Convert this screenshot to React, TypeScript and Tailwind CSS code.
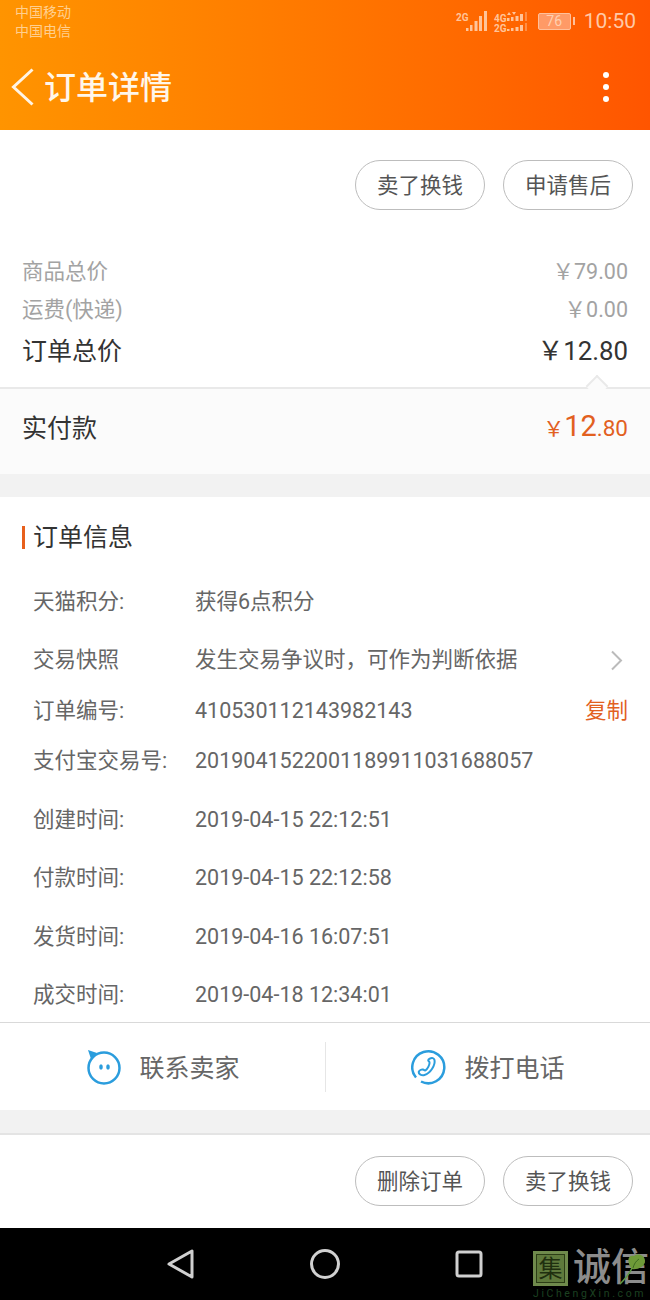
import React from "react";

const font = { fontFamily: '"Roboto","Noto Sans CJK SC",sans-serif' };

function Pill({ children }: { children: React.ReactNode }) {
  return (
    <div className="flex h-[50px] w-[130px] items-center justify-center rounded-full border border-[#bdbdbd] pt-[2px] text-[21.500px] leading-none text-[#555]">
      {children}
    </div>
  );
}

function Price({ label, value, cls, h, valueCls }: { label: string; value: string; cls: string; h: string; valueCls?: string }) {
  return (
    <div className={`flex items-center justify-between pl-[22px] pr-[22px] ${cls} ${h}`}>
      <span>{label}</span>
      <span className={valueCls}>{value}</span>
    </div>
  );
}

function Row({ label, value, h, right }: { label: string; value: string; h: string; right?: React.ReactNode }) {
  return (
    <div className={`flex items-center pl-[33px] pr-[22px] text-[21.500px] leading-none text-[#666] ${h}`}>
      <span className="w-[162px] shrink-0">{label}</span>
      <span className="flex-1">{value}</span>
      {right}
    </div>
  );
}

function Signal() {
  return (
    <svg width="76" height="24" viewBox="0 0 76 24" fill="#ffc49a">
      <text x="1" y="12" fontSize="10" fontWeight="700" fontFamily="Roboto">2G</text>
      <rect x="11" y="19" width="2.500" height="3" /><rect x="15" y="16" width="2.500" height="6" /><rect x="19.500" y="12" width="3" height="10" /><rect x="24" y="7" width="3" height="15" /><rect x="29" y="2" width="3" height="20" />
      <text x="39" y="13" fontSize="10" fontWeight="700" fontFamily="Roboto">4G</text>
      <text x="39" y="23" fontSize="10" fontWeight="700" fontFamily="Roboto">2G</text>
      <path d="M52 6l2-3 2 3zM57 3l2 3 2-3z" />
      <rect x="52" y="9" width="2.500" height="3" /><rect x="56" y="8" width="2.500" height="4" /><rect x="60.500" y="7" width="3" height="5" /><rect x="65" y="5" width="3" height="7" /><rect x="70" y="3" width="2" height="9" opacity=".45" />
      <rect x="52" y="20" width="2.500" height="2" /><rect x="56" y="19" width="2.500" height="3" /><rect x="60.500" y="18" width="3" height="4" /><rect x="65" y="16" width="3" height="6" /><rect x="70" y="14" width="2" height="8" opacity=".45" />
    </svg>
  );
}

export default function App() {
  return (
    <div className="flex h-[1300px] w-[650px] flex-col overflow-hidden bg-white" style={font}>
      <header className="h-[130px] shrink-0 bg-gradient-to-r from-[#ff9400] to-[#ff5500]">
        <div className="flex h-[43px] items-start justify-between pl-[15px] pr-[14px]">
          <div className="pt-[3px] text-[14px] leading-[19px] text-[#ffcf8f]">
            <div>中国移动</div>
            <div>中国电信</div>
          </div>
          <div className="flex h-[43px] items-center gap-[7px] pb-[1px]">
            <Signal />
            <div className="flex items-center gap-[2px]">
              <div className="flex h-[17px] w-[33px] items-center justify-center rounded-[2px] border border-[#ffc09a] bg-[#ff9a66] text-[14px] leading-none text-[#ffd0b0]">76</div>
              <div className="h-[8px] w-[2px] bg-[#ffc09a]" />
            </div>
            <span className="ml-[2px] text-[21px] leading-none text-[#ffc9a6]">10:50</span>
          </div>
        </div>
        <div className="flex h-[87px] items-center justify-between pl-[11px] pr-[41px]">
          <div className="flex items-center gap-[9px]">
            <svg width="24" height="38" viewBox="0 0 24 38" fill="none" stroke="#fff4e4" strokeWidth="3">
              <path d="M21.500 1.500 2.500 19l19 17.500" />
            </svg>
            <span className="pt-[3px] text-[32px] font-medium leading-none text-[#fff6ea]">订单详情</span>
          </div>
          <div className="flex flex-col gap-[6px]">
            <div className="h-[6px] w-[6px] rounded-full bg-white" />
            <div className="h-[6px] w-[6px] rounded-full bg-white" />
            <div className="h-[6px] w-[6px] rounded-full bg-white" />
          </div>
        </div>
      </header>

      <section className="flex h-[123px] shrink-0 items-start justify-end gap-[18px] pr-[17px] pt-[30px]">
        <Pill>卖了换钱</Pill>
        <Pill>申请售后</Pill>
      </section>

      <Price label="商品总价" value="￥79.00" h="h-[38px]" cls="text-[21.500px] leading-none text-[#a3a3a3]" />
      <Price label="运费(快递)" value="￥0.00" h="h-[38px]" cls="text-[21.500px] leading-none text-[#a3a3a3]" />
      <Price label="订单总价" value="￥12.80" h="h-[43px] pt-[2px]" cls="text-[25px] leading-none text-[#333]" valueCls="text-[25.800px]" />

      <div className="relative mt-[15px] flex h-[87px] shrink-0 items-center justify-between border-t-2 border-[#e9e9e9] bg-[#fbfbfb] pb-[7px] pl-[22px] pr-[22px]">
        <div className="absolute right-[45px] top-[-13px] h-[16px] w-[16px] translate-y-[2px] rotate-45 border-l-2 border-t-2 border-[#e9e9e9] bg-[#fbfbfb]" />
        <span className="text-[25px] leading-none text-[#333]">实付款</span>
        <span className="mb-[3px] flex items-baseline text-[#e2601f]">
          <span className="text-[21px] leading-none">￥</span>
          <span className="text-[29px] leading-none">12</span>
          <span className="text-[22.500px] leading-none">.80</span>
        </span>
      </div>

      <div className="h-[23px] shrink-0 bg-[#f2f2f2]" />

      <section className="flex h-[526px] shrink-0 flex-col border-b border-[#d9d9d9]">
        <div className="flex h-[81px] shrink-0 items-center pb-[1px] pl-[22px]">
          <div className="h-[23px] w-[3px] bg-[#e8601c]" />
          <span className="ml-[8px] text-[25px] leading-none text-[#333]">订单信息</span>
        </div>
        <Row label="天猫积分:" value="获得6点积分" h="h-[48px]" />
        <Row
          label="交易快照"
          value="发生交易争议时，可作为判断依据"
          h="h-[68px]"
          right={
            <svg width="13" height="21" viewBox="0 0 13 21" fill="none" stroke="#bbb" strokeWidth="2" className="mr-[5px]">
              <path d="M2 1.500l9 9-9 9" />
            </svg>
          }
        />
        <Row label="订单编号:" value="410530112143982143" h="h-[34px]" right={<span className="text-[#e2601f]">复制</span>} />
        <Row label="支付宝交易号:" value="2019041522001189911031688057" h="h-[66px]" />
        <Row label="创建时间:" value="2019-04-15 22:12:51" h="h-[52px]" />
        <Row label="付款时间:" value="2019-04-15 22:12:58" h="h-[64px]" />
        <Row label="发货时间:" value="2019-04-16 16:07:51" h="h-[54px]" />
        <Row label="成交时间:" value="2019-04-18 12:34:01" h="h-[58px] pt-[4px]" />
      </section>

      <section className="flex h-[87px] shrink-0 items-center text-[25px] leading-none text-[#666]">
        <div className="flex h-[50px] w-[326px] items-center justify-center gap-[17px] border-r border-[#e6e6e6] pl-[1px]">
          <svg width="36" height="36" viewBox="0 0 36 36" fill="none">
            <circle cx="18" cy="19" r="15.500" stroke="#2b9ddd" strokeWidth="2.500" />
            <path d="M2 1l9 3-6 6z" fill="#2b9ddd" />
            <ellipse cx="15" cy="18" rx="1.800" ry="2.800" fill="#2b9ddd" />
            <ellipse cx="22" cy="18" rx="1.800" ry="2.800" fill="#2b9ddd" />
          </svg>
          <span className="pt-[3px]">联系卖家</span>
        </div>
        <div className="flex h-[50px] w-[324px] items-center justify-center gap-[17px]">
          <svg width="36" height="36" viewBox="0 0 36 36" fill="none" stroke="#2b9ddd" strokeWidth="2.500">
            <path d="M5 28.500A16 16 0 1 1 10 32.500" />
            <path d="M19 9.500c2-1 4-.5 4.500 1.500 1 5-4 13.500-10 15-3 .8-6-1-5.800-3 .2-1.500 3-3 4.300-2.500 1 .4 1.500 1.200 2.500.8 2-1 4.500-6 4-8-.3-1-1.300-1-1.300-2 0-.8 1-1.500 1.800-1.800z" strokeWidth="2" />
          </svg>
          <span className="pt-[3px]">拨打电话</span>
        </div>
      </section>

      <div className="h-[23px] shrink-0 bg-[#f2f2f2]" />

      <section className="flex h-[95px] shrink-0 items-start justify-end gap-[18px] border-t-2 border-[#e4e4e4] pr-[17px] pt-[21px]">
        <Pill>删除订单</Pill>
        <Pill>卖了换钱</Pill>
      </section>

      <nav className="relative flex flex-1 items-center overflow-hidden bg-black pb-[1px] pl-[166px]">
        <svg width="28" height="36" viewBox="0 0 28 36" fill="none" stroke="#d0d0d0" strokeWidth="3">
          <path d="M26 5v26L3 18z" strokeLinejoin="round" />
        </svg>
        <svg width="32" height="32" viewBox="0 0 32 32" fill="none" stroke="#d0d0d0" strokeWidth="3" className="ml-[115px]">
          <circle cx="16" cy="16" r="13.500" />
        </svg>
        <svg width="28" height="28" viewBox="0 0 28 28" fill="none" stroke="#d0d0d0" strokeWidth="3" className="ml-[114px]">
          <rect x="2" y="2" width="24" height="24" rx="2" />
        </svg>
        <div className="absolute left-[533px] top-[23px] h-[35px] w-[35px] border-[3px] border-[#6f8a4c]">
          <div className="flex h-full w-full items-center justify-center border border-[#2c3d16] bg-[#5f7a3c] text-[24px] leading-none text-[#1f2f0f]">集</div>
        </div>
        <div className="absolute left-[573px] top-[20px] whitespace-nowrap text-[38px] font-medium leading-none text-[#8c8c8c]">诚信</div>
        <div className="absolute left-[533px] top-[61px] whitespace-nowrap text-[10.500px] leading-none tracking-[2.600px] text-[#1c4020]">JiChengXin.com</div>
        <svg width="32" height="36" viewBox="0 0 32 36" className="absolute left-[618px] top-[23px]">
          <path d="M2 33C7 28 11 24 14 17" stroke="#5f9a44" strokeWidth="1.500" fill="none" />
          <path d="M14 18C8 11 10 3 16 5c4-3 11-1 11 5 0 6-8 9-13 8z" fill="#6e9a38" />
          <path d="M15 17c1-4 3-7 6-9" stroke="#3d6a22" strokeWidth="1" fill="none" />
        </svg>
      </nav>
    </div>
  );
}
